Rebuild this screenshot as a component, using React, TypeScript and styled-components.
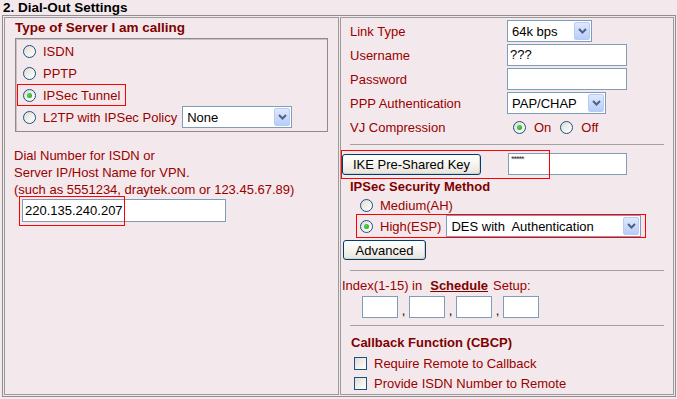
import styled, { createGlobalStyle } from "styled-components";

const GlobalStyle = createGlobalStyle`
  body {
    margin: 0;
    padding: 0;
    background: #f3e9ec;
    font-family: "Liberation Sans", Arial, sans-serif;
    font-size: 13px;
  }
`;

const Title = styled.div`
  height: 15px;
  line-height: 15px;
  padding-left: 3px;
  font-size: 13.5px;
  font-weight: bold;
  color: #000;
`;

const Panel = styled.div`
  margin-left: 2px;
  width: 674px;
  height: 382px;
  box-sizing: border-box;
  border: 1px solid #8f8f8f;
  padding: 1px;
  display: grid;
  grid-template-columns: 335px 334px;
  column-gap: 1px;
`;

const Cell = styled.div`
  border: 1px solid #9a9a9a;
  display: flex;
  flex-direction: column;
  align-items: flex-start;
`;

const Heading = styled.div<{ $indent: number; $top: number; $size?: number }>`
  margin: ${(p) => p.$top}px 0 0 ${(p) => p.$indent}px;
  line-height: 16px;
  font-size: ${(p) => p.$size ?? 13}px;
  font-weight: bold;
  color: #800000;
`;

const ServerBox = styled.div`
  margin: 2px 0 0 10px;
  width: 313px;
  height: 94px;
  box-sizing: border-box;
  border: 1px solid #8c8c8c;
  box-shadow: inset 1px 1px 0 #c9c2c5;
  padding-top: 1px;
`;

const Option = styled.div<{ $highlight?: boolean }>`
  display: flex;
  align-items: center;
  height: 22px;
  box-sizing: border-box;
  width: fit-content;
  padding-left: ${(p) => (p.$highlight ? 5 : 7)}px;
  padding-right: ${(p) => (p.$highlight ? 5 : 0)}px;
  margin-left: ${(p) => (p.$highlight ? 1 : 0)}px;
  border: ${(p) => (p.$highlight ? "1px solid #ff0000" : "none")};
  color: #990000;
`;

const Radio = styled.span<{ $checked?: boolean }>`
  position: relative;
  flex: none;
  width: 13px;
  height: 13px;
  box-sizing: border-box;
  border-radius: 50%;
  border: 1px solid #1c5180;
  background: linear-gradient(135deg, #dcdcd7 0%, #f0efea 50%, #ffffff 100%);

  &::after {
    content: "";
    display: ${(p) => (p.$checked ? "block" : "none")};
    position: absolute;
    left: 3px;
    top: 3px;
    width: 5px;
    height: 5px;
    border-radius: 50%;
    background: radial-gradient(circle at 40% 40%, #5ad25a, #1d9a1d);
  }
`;

const OptText = styled.span<{ $gap?: number }>`
  margin-left: ${(p) => p.$gap ?? 7}px;
  color: #990000;
  white-space: nowrap;
`;

const SelectBox = styled.div<{ $width: number; $height?: number; $gap?: number }>`
  display: flex;
  align-items: center;
  width: ${(p) => p.$width}px;
  height: ${(p) => p.$height ?? 22}px;
  margin-left: ${(p) => p.$gap ?? 0}px;
  box-sizing: border-box;
  border: 1px solid #7f9db9;
  background: #fff;
  color: #000;
  padding-left: 4px;
  white-space: pre;
`;

const SelectValue = styled.span`
  flex: 1;
`;

const ArrowButton = styled.span`
  flex: none;
  width: 16px;
  height: calc(100% - 2px);
  margin-right: 1px;
  box-sizing: border-box;
  border: 1px solid #b8cbf4;
  border-radius: 2px;
  background: linear-gradient(to bottom, #dfe8fd, #b9cdf8);
  display: flex;
  align-items: center;
  justify-content: center;
`;

const Select = ({ width, value, gap }: { width: number; value: string; gap?: number }) => (
  <SelectBox $width={width} $gap={gap}>
    <SelectValue>{value}</SelectValue>
    <ArrowButton>
      <svg width="9" height="6" viewBox="0 0 9 6">
        <polyline points="1,1 4.5,4.5 8,1" fill="none" stroke="#4d6185" strokeWidth="2" />
      </svg>
    </ArrowButton>
  </SelectBox>
);

const DialText = styled.div`
  margin: 15px 0 0 9px;
  line-height: 17px;
  color: #990000;
  white-space: nowrap;
`;

const AddrWrap = styled.div`
  position: relative;
  margin: 1px 0 0 17px;
`;

const TextInput = styled.div<{ $width: number; $height?: number }>`
  width: ${(p) => p.$width}px;
  height: ${(p) => p.$height ?? 22}px;
  box-sizing: border-box;
  border: 1px solid #7f9db9;
  background: #fff;
  color: #000;
  padding-left: 2px;
  line-height: ${(p) => (p.$height ?? 22) - 2}px;
  white-space: nowrap;
  overflow: hidden;
`;

const Masked = styled.div`
  font-size: 9px;
  line-height: 9px;
  letter-spacing: -1px;
  padding-top: 1px;
  color: #333;
`;

const RedFrame = styled.div<{ $left: number; $top: number; $w: number; $h: number }>`
  position: absolute;
  left: ${(p) => p.$left}px;
  top: ${(p) => p.$top}px;
  width: ${(p) => p.$w}px;
  height: ${(p) => p.$h}px;
  box-sizing: border-box;
  border: 1px solid #ff0000;
  pointer-events: none;
`;

const FormGrid = styled.div`
  margin-top: 2px;
  display: flex;
  flex-direction: column;
  row-gap: 2px;
  padding-left: 9px;
`;

const FormRow = styled.div`
  display: grid;
  grid-template-columns: 157px auto;
  align-items: center;
  height: 22px;
`;

const FieldLabel = styled.span`
  color: #990000;
`;

const Inline = styled.div<{ $gap?: number }>`
  display: flex;
  align-items: center;
  padding-left: ${(p) => p.$gap ?? 0}px;
`;

const Divider = styled.div<{ $top: number }>`
  align-self: stretch;
  margin: ${(p) => p.$top}px 9px 0;
  height: 0;
  border-top: 1px solid #a3a0a1;
`;

const KeyRow = styled.div`
  position: relative;
  display: flex;
  align-items: center;
  height: 22px;
  margin-top: 8px;
  padding-left: 1px;
`;

const XpButton = styled.div<{ $width: number; $height: number }>`
  width: ${(p) => p.$width}px;
  height: ${(p) => p.$height}px;
  box-sizing: border-box;
  border: 1px solid #003c74;
  border-radius: 3px;
  background: linear-gradient(to bottom, #ffffff 0%, #f4f3ee 55%, #e6e3da 100%);
  box-shadow: inset -1px -1px 0 #d6d0c5;
  display: flex;
  align-items: center;
  justify-content: center;
  color: #000;
  white-space: nowrap;
`;

const KeyInputWrap = styled.div`
  margin-left: 27px;
`;

const MethodRow = styled.div`
  display: flex;
  align-items: center;
  height: 18px;
  margin: 1px 0 0 19px;
`;

const HighRow = styled.div`
  display: flex;
  align-items: center;
  width: 290px;
  height: 24px;
  box-sizing: border-box;
  margin-left: 15px;
  padding-left: 3px;
  border: 1px solid #ff0000;
`;

const AdvancedButton = styled(XpButton)`
  margin: 2px 0 0 2px;
`;

const ScheduleLine = styled.div`
  margin-top: 7px;
  padding-left: 1px;
  line-height: 16px;
  color: #990000;
  white-space: nowrap;
`;

const ScheduleLink = styled.span`
  font-weight: bold;
  text-decoration: underline;
  color: #800000;
  margin: 0 5px 0 8px;
`;

const IndexRow = styled.div`
  display: flex;
  align-items: flex-end;
  margin-top: 2px;
  padding-left: 21px;
`;

const Comma = styled.span`
  width: 11px;
  text-align: center;
  line-height: 14px;
  color: #000;
`;

const CheckRow = styled.div<{ $top: number }>`
  display: flex;
  align-items: center;
  height: 20px;
  margin-top: ${(p) => p.$top}px;
  padding-left: 13px;
`;

const CheckBox = styled.span`
  flex: none;
  width: 13px;
  height: 13px;
  box-sizing: border-box;
  border: 1px solid #1c5180;
  background: linear-gradient(135deg, #dcdcd7 0%, #f0efea 50%, #ffffff 100%);
`;

const App = () => {
  return (
    <>
      <GlobalStyle />
      <Title>2. Dial-Out Settings</Title>
      <Panel>
        <Cell>
          <Heading $indent={10} $top={2} $size={13.5}>
            Type of Server I am calling
          </Heading>
          <ServerBox>
            <Option>
              <Radio />
              <OptText>ISDN</OptText>
            </Option>
            <Option>
              <Radio />
              <OptText>PPTP</OptText>
            </Option>
            <Option $highlight>
              <Radio $checked />
              <OptText>IPSec Tunnel</OptText>
            </Option>
            <Option>
              <Radio />
              <OptText>L2TP with IPSec Policy</OptText>
              <Select width={110} value="None" gap={5} />
            </Option>
          </ServerBox>
          <DialText>
            Dial Number for ISDN or
            <br />
            Server IP/Host Name for VPN.
            <br />
            (such as 5551234, draytek.com or 123.45.67.89)
          </DialText>
          <AddrWrap>
            <TextInput $width={204} $height={23}>
              220.135.240.207
            </TextInput>
            <RedFrame $left={-3} $top={-3} $w={106} $h={30} />
          </AddrWrap>
        </Cell>

        <Cell>
          <FormGrid>
            <FormRow>
              <FieldLabel>Link Type</FieldLabel>
              <Select width={85} value="64k bps" />
            </FormRow>
            <FormRow>
              <FieldLabel>Username</FieldLabel>
              <TextInput $width={120}>???</TextInput>
            </FormRow>
            <FormRow>
              <FieldLabel>Password</FieldLabel>
              <TextInput $width={120} />
            </FormRow>
            <FormRow>
              <FieldLabel>PPP Authentication</FieldLabel>
              <Select width={99} value="PAP/CHAP" />
            </FormRow>
            <FormRow>
              <FieldLabel>VJ Compression</FieldLabel>
              <Inline $gap={6}>
                <Radio $checked />
                <OptText $gap={8}>On</OptText>
                <Radio style={{ marginLeft: 9 }} />
                <OptText $gap={8}>Off</OptText>
              </Inline>
            </FormRow>
          </FormGrid>

          <Divider $top={6} />

          <KeyRow>
            <XpButton $width={139} $height={21}>
              IKE Pre-Shared Key
            </XpButton>
            <KeyInputWrap>
              <TextInput $width={119}>
                <Masked>*****</Masked>
              </TextInput>
            </KeyInputWrap>
            <RedFrame $left={0} $top={-3} $w={209} $h={29} />
          </KeyRow>

          <Heading $indent={9} $top={4}>
            IPSec Security Method
          </Heading>
          <MethodRow>
            <Radio />
            <OptText>Medium(AH)</OptText>
          </MethodRow>
          <HighRow>
            <Radio $checked />
            <OptText>High(ESP)</OptText>
            <Select width={195} value="DES with  Authentication" gap={5} />
          </HighRow>
          <AdvancedButton $width={83} $height={20}>
            Advanced
          </AdvancedButton>

          <Divider $top={10} />

          <ScheduleLine>
            Index(1-15) in
            <ScheduleLink>Schedule</ScheduleLink>
            Setup:
          </ScheduleLine>
          <IndexRow>
            <TextInput $width={36} />
            <Comma>,</Comma>
            <TextInput $width={36} />
            <Comma>,</Comma>
            <TextInput $width={36} />
            <Comma>,</Comma>
            <TextInput $width={36} />
          </IndexRow>

          <Divider $top={7} />

          <Heading $indent={10} $top={9}>
            Callback Function (CBCP)
          </Heading>
          <CheckRow $top={2}>
            <CheckBox />
            <OptText>Require Remote to Callback</OptText>
          </CheckRow>
          <CheckRow $top={0}>
            <CheckBox />
            <OptText>Provide ISDN Number to Remote</OptText>
          </CheckRow>
        </Cell>
      </Panel>
    </>
  );
};

export default App;
